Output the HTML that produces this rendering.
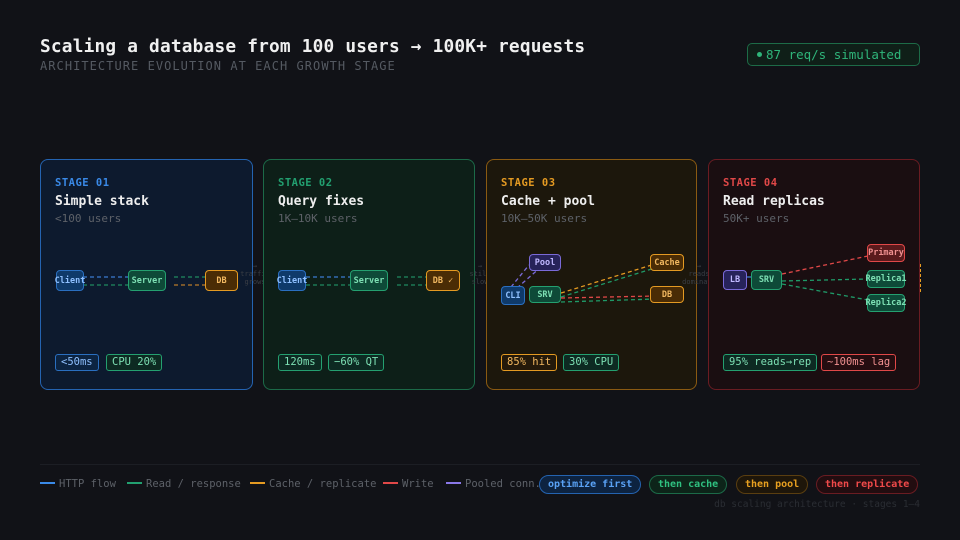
<!DOCTYPE html>
<html><head><meta charset="utf-8"><style>
*{margin:0;padding:0;box-sizing:border-box}
body{width:960px;height:540px;background:#111217;font-family:"DejaVu Sans Mono","Liberation Mono",monospace;color:#e6e6e6;position:relative;overflow:hidden}
.a{position:absolute}
.title{left:40px;top:36px;font-size:17.8px;font-weight:bold;color:#f0f0f0;letter-spacing:.2px;white-space:nowrap}
.sub{left:40px;top:59px;font-size:12px;color:#555a62;letter-spacing:1.05px;white-space:nowrap}
.rps{left:747px;top:43px;width:173px;height:23px;border:1px solid #1d6b47;border-radius:5px;background:#0f1f18;color:#2fb57a;font-size:12.5px;line-height:21px;padding-left:9px}
.rps i{display:inline-block;width:5px;height:5px;border-radius:50%;background:#2fb57a;margin-right:4px;vertical-align:2px}
.card{top:159px;height:231px;border:1px solid;border-radius:8px}
.st{position:absolute;left:14px;top:17px;font-size:10.5px;font-weight:bold;letter-spacing:0.5px}
.ct{position:absolute;left:14px;top:34px;font-size:13px;font-weight:bold;color:#eee}
.cs{position:absolute;left:14px;top:52px;font-size:11px;color:#5d6168}
.n{position:absolute;border:1px solid;border-radius:4px;font-size:8.5px;font-weight:bold;display:flex;align-items:center;justify-content:center;white-space:nowrap}
.b{position:absolute;top:194px;height:17px;border:1px solid;border-radius:3px;font-size:10.5px;line-height:15px;padding:0 5px;white-space:nowrap}
.blue{border-color:#2a6fc0;color:#8fc0ff;background:#0f3a6a}
.green{border-color:#24a070;color:#7de0b4;background:#0e4a38}
.orng{border-color:#e49a22;color:#f2b860;background:#4a2c05}
.purp{border-color:#7a6ad8;color:#c0b8ff;background:#27235a}
.red{border-color:#e04848;color:#f09090;background:#5a1a1c}
.leg{top:478px;font-size:10.5px;color:#5d6168;white-space:nowrap}
.leg i{display:inline-block;width:15px;height:2px;vertical-align:3px;margin-right:4px}
.pill{top:475px;height:19px;border:1px solid;border-radius:10px;font-size:10px;font-weight:bold;line-height:17px;padding:0 8px;white-space:nowrap}
.tr{font-size:7px;color:#3a3e45;text-align:center;line-height:8px}
</style></head><body>
<div class="a title">Scaling a database from 100 users → 100K+ requests</div>
<div class="a sub">ARCHITECTURE EVOLUTION AT EACH GROWTH STAGE</div>
<div class="a rps"><i></i>87 req/s simulated</div>

<!-- card 1 -->
<div class="a card" style="left:40px;width:213px;border-color:#2463b0;background:#0d1a2e">
<div class="st" style="color:#3a8ae8">STAGE 01</div><div class="ct">Simple stack</div><div class="cs">&lt;100 users</div>
<svg class="a" style="left:0;top:0" width="213" height="231"><g stroke-dasharray="4 3" stroke-width="1.3" fill="none">
<line x1="42" y1="117" x2="87" y2="117" stroke="#3b7bd0"/><line x1="42" y1="125" x2="87" y2="125" stroke="#1f8a60"/>
<line x1="133" y1="117" x2="164" y2="117" stroke="#1f8a60"/><line x1="133" y1="125" x2="170" y2="125" stroke="#b87a2a"/></g></svg>
<div class="n blue" style="left:15px;top:110px;width:28px;height:21px">Client</div>
<div class="n green" style="left:87px;top:110px;width:38px;height:21px">Server</div>
<div class="n orng" style="left:164px;top:110px;width:33px;height:21px">DB</div>
<div class="b blue" style="left:14px;background:#0c2442">&lt;50ms</div>
<div class="b green" style="left:65px;background:#0d2a22">CPU 20%</div>
</div>
<div class="a tr" style="left:240px;top:262px;width:30px">→<br>traffic<br>grows</div>

<!-- card 2 -->
<div class="a card" style="left:263px;width:212px;border-color:#1c6a48;background:#0d1f18">
<div class="st" style="color:#22a070">STAGE 02</div><div class="ct">Query fixes</div><div class="cs">1K–10K users</div>
<svg class="a" style="left:0;top:0" width="212" height="231"><g stroke-dasharray="4 3" stroke-width="1.3" fill="none">
<line x1="42" y1="117" x2="87" y2="117" stroke="#3b7bd0"/><line x1="42" y1="125" x2="87" y2="125" stroke="#1f8a60"/>
<line x1="133" y1="117" x2="164" y2="117" stroke="#1f8a60"/><line x1="133" y1="125" x2="164" y2="125" stroke="#1f8a60"/></g></svg>
<div class="n blue" style="left:14px;top:110px;width:28px;height:21px">Client</div>
<div class="n green" style="left:86px;top:110px;width:38px;height:21px">Server</div>
<div class="n orng" style="left:162px;top:110px;width:34px;height:21px">DB ✓</div>
<div class="b green" style="left:14px;background:#0d2a22">120ms</div>
<div class="b green" style="left:64px;background:#0d2a22">−60% QT</div>
</div>
<div class="a tr" style="left:465px;top:262px;width:30px">→<br>still<br>slow</div>

<!-- card 3 -->
<div class="a card" style="left:486px;width:211px;border-color:#8a5a12;background:#1c170c">
<div class="st" style="color:#e49a22">STAGE 03</div><div class="ct">Cache + pool</div><div class="cs">10K–50K users</div>
<svg class="a" style="left:0;top:0" width="211" height="231"><g stroke-dasharray="4 3" stroke-width="1.3" fill="none">
<line x1="24" y1="127" x2="42" y2="105" stroke="#7a6ad8"/><line x1="30" y1="128" x2="55" y2="106" stroke="#7a6ad8"/>
<line x1="74" y1="133" x2="168" y2="104" stroke="#e49a22"/><line x1="74" y1="137" x2="168" y2="108" stroke="#1f9a68"/>
<line x1="74" y1="138" x2="168" y2="136" stroke="#e04848"/><line x1="74" y1="142" x2="168" y2="139" stroke="#1f9a68"/></g></svg>
<div class="n purp" style="left:42px;top:94px;width:32px;height:17px">Pool</div>
<div class="n blue" style="left:14px;top:126px;width:24px;height:19px">CLI</div>
<div class="n green" style="left:42px;top:126px;width:32px;height:17px">SRV</div>
<div class="n orng" style="left:163px;top:94px;width:34px;height:17px">Cache</div>
<div class="n orng" style="left:163px;top:126px;width:34px;height:17px">DB</div>
<div class="b orng" style="left:14px;background:#24190a">85% hit</div>
<div class="b green" style="left:76px;background:#0d2a22">30% CPU</div>
</div>
<div class="a tr" style="left:682px;top:262px;width:34px">→<br>reads<br>dominate</div>

<!-- card 4 -->
<div class="a card" style="left:708px;width:212px;border-color:#6a1c22;background:#1a0e11">
<div class="st" style="color:#e04848">STAGE 04</div><div class="ct">Read replicas</div><div class="cs">50K+ users</div>
<svg class="a" style="left:0;top:0" width="212" height="231"><g stroke-dasharray="4 3" stroke-width="1.3" fill="none">
<line x1="73" y1="114" x2="159" y2="96" stroke="#e04848"/><line x1="73" y1="121" x2="159" y2="119" stroke="#1f9a68"/>
<line x1="73" y1="124" x2="159" y2="140" stroke="#1f9a68"/><line x1="37" y1="117" x2="43" y2="117" stroke="#3b7bd0" stroke-dasharray="none"/></g></svg>
<div class="n purp" style="left:14px;top:110px;width:24px;height:20px">LB</div>
<div class="n green" style="left:42px;top:110px;width:31px;height:20px">SRV</div>
<div class="n red" style="left:158px;top:84px;width:38px;height:18px">Primary</div>
<div class="n green" style="left:158px;top:110px;width:38px;height:18px">Replica1</div>
<div class="n green" style="left:158px;top:134px;width:38px;height:18px">Replica2</div>
<div class="b green" style="left:14px;background:#0d2a22">95% reads→rep</div>
<div class="b red" style="left:112px;background:#250d10">~100ms lag</div>
</div>
<div class="a" style="left:920px;top:264px;width:1px;height:28px;border-left:1px dashed #e49a22"></div>

<div class="a" style="left:40px;top:464px;width:880px;height:1px;background:#1c1e24"></div>
<div class="a leg" style="left:40px"><i style="background:#3a8ae8"></i>HTTP flow</div>
<div class="a leg" style="left:127px"><i style="background:#22a070"></i>Read / response</div>
<div class="a leg" style="left:250px"><i style="background:#e49a22"></i>Cache / replicate</div>
<div class="a leg" style="left:383px"><i style="background:#e04848"></i>Write</div>
<div class="a leg" style="left:446px"><i style="background:#8a78e8"></i>Pooled conn.</div>
<div class="a pill" style="left:539px;border-color:#2463b0;background:#0d2340;color:#5aa2f5">optimize first</div>
<div class="a pill" style="left:649px;border-color:#1c6a48;background:#0d2419;color:#2fc080">then cache</div>
<div class="a pill" style="left:736px;border-color:#5a3e10;background:#1e160a;color:#e8a020">then pool</div>
<div class="a pill" style="left:816px;border-color:#6a1c22;background:#220d10;color:#f04a4a">then replicate</div>
<div class="a" style="left:708px;top:499px;width:212px;text-align:right;font-size:9.5px;color:#2a2d33;white-space:nowrap">db scaling architecture · stages 1–4</div>
</body></html>
